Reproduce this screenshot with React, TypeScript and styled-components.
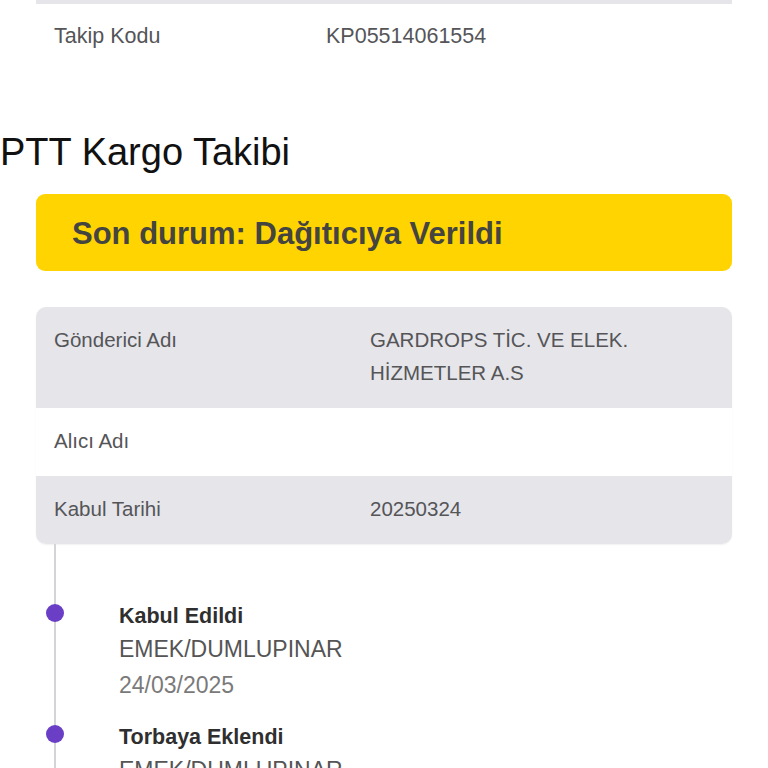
import styled, { createGlobalStyle } from "styled-components";

const GlobalStyle = createGlobalStyle`
  html, body {
    margin: 0;
    padding: 0;
    background: #ffffff;
    overflow: hidden;
  }
  body {
    font-family: "Liberation Sans", Arial, Helvetica, sans-serif;
  }
`;

const Page = styled.div`
  width: 768px;
`;

const Card = styled.div<{ $shadow?: boolean; $cutTop?: boolean }>`
  margin: 0 36px;
  border-radius: ${(p) => (p.$cutTop ? "0 0 10px 10px" : "10px")};
  overflow: hidden;
  box-shadow: ${(p) => (p.$shadow ? "0 1px 2px rgba(0, 0, 0, 0.06)" : "none")};
`;

// bottom of the row scrolled above the viewport
const ScrolledEdge = styled.div`
  height: 4px;
  background: #e5e5ea;
`;

const Row = styled.div<{ $gray?: boolean; $labelWidth: number; $size: number }>`
  display: grid;
  grid-template-columns: ${(p) => p.$labelWidth}px 1fr;
  padding: 16px 18px 19px;
  background: ${(p) => (p.$gray ? "#e5e5ea" : "#ffffff")};
  font-size: ${(p) => p.$size}px;
  line-height: 33px;
  color: #555558;
`;

const Value = styled.div`
  white-space: pre-line;
`;

const Title = styled.h1`
  margin: 58px 0 20px;
  font-size: 38px;
  font-weight: 400;
  line-height: 44px;
  color: #111111;
`;

const Banner = styled.div`
  box-sizing: border-box;
  margin: 0 36px 36px;
  height: 77px;
  display: flex;
  align-items: center;
  padding: 2px 36px 0;
  background: #ffd400;
  border-radius: 9px;
  font-size: 31px;
  font-weight: 700;
  color: #444440;
`;

const Timeline = styled.div`
  position: relative;
  margin-left: 54px;
  padding-top: 56px;
  border-left: 2px solid #d4d4d8;
`;

const Step = styled.div`
  position: relative;
  padding-left: 63px;
  margin-bottom: 19px;
`;

const Dot = styled.span`
  position: absolute;
  left: -10px;
  top: 4px;
  width: 18px;
  height: 18px;
  border-radius: 50%;
  background: #6a3fc6;
`;

const StepTitle = styled.div`
  font-size: 21.5px;
  font-weight: 700;
  line-height: 33px;
  color: #2f2f2f;
`;

const StepPlace = styled.div`
  font-size: 23px;
  line-height: 33px;
  color: #555555;
`;

const StepDate = styled.div`
  margin-top: 3px;
  font-size: 23px;
  line-height: 33px;
  color: #7a7a7a;
`;

const info = [
  { label: "Gönderici Adı", value: "GARDROPS TİC. VE ELEK.\nHİZMETLER A.S", gray: true },
  { label: "Alıcı Adı", value: "", gray: false },
  { label: "Kabul Tarihi", value: "20250324", gray: true },
];

const steps = [
  { title: "Kabul Edildi", place: "EMEK/DUMLUPINAR", date: "24/03/2025" },
  { title: "Torbaya Eklendi", place: "EMEK/DUMLUPINAR", date: "24/03/2025" },
];

export default function App() {
  return (
    <Page>
      <GlobalStyle />
      <Card $cutTop>
        <ScrolledEdge />
        <Row $labelWidth={272} $size={21.5}>
          <div>Takip Kodu</div>
          <Value>KP05514061554</Value>
        </Row>
      </Card>

      <Title>PTT Kargo Takibi</Title>

      <Banner>Son durum: Dağıtıcıya Verildi</Banner>

      <Card $shadow>
        {info.map((r) => (
          <Row key={r.label} $gray={r.gray} $labelWidth={316} $size={20.5}>
            <div>{r.label}</div>
            <Value>{r.value}</Value>
          </Row>
        ))}
      </Card>

      <Timeline>
        {steps.map((s, i) => (
          <Step key={i}>
            <Dot />
            <StepTitle>{s.title}</StepTitle>
            <StepPlace>{s.place}</StepPlace>
            <StepDate>{s.date}</StepDate>
          </Step>
        ))}
      </Timeline>
    </Page>
  );
}
